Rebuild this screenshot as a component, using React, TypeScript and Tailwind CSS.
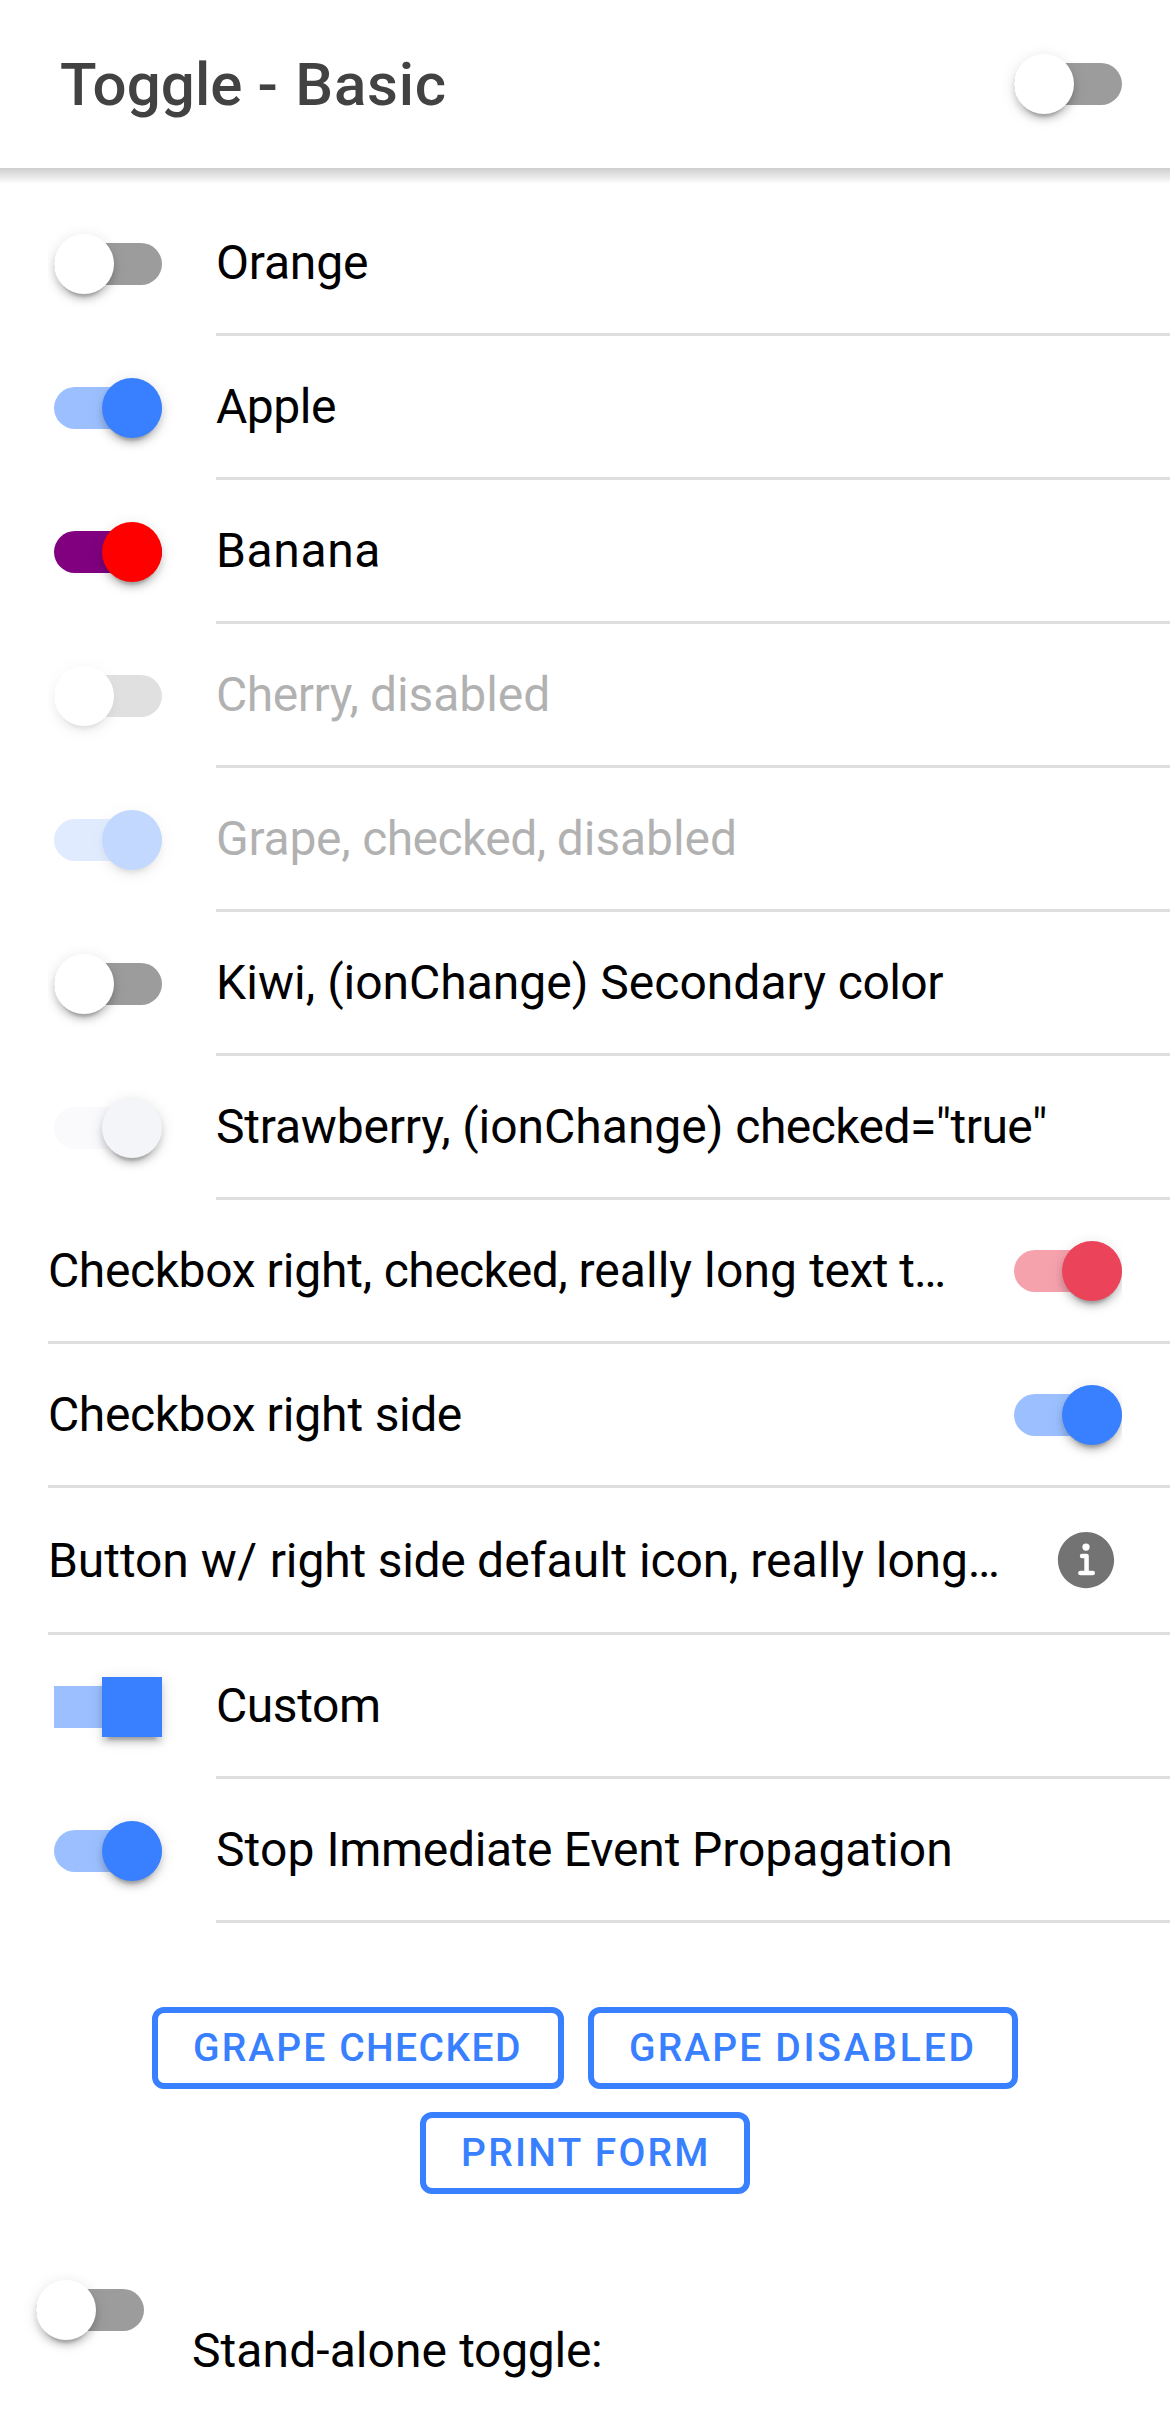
import type { ReactNode } from "react";
import { IoInformationCircle } from "react-icons/io5";

// Roboto advance widths in font units (2048 per em).
const ADVANCE: Record<string, number> = {
  " ": 507, A: 1336, B: 1275, C: 1333, E: 1164, G: 1395, I: 557, K: 1284, O: 1408, P: 1292, S: 1217,
  a: 1114, b: 1149, c: 1072, d: 1155, e: 1085, f: 711, g: 1149, h: 1128, i: 497, k: 1038, l: 497, m: 1795,
  n: 1130, o: 1168, p: 1149, r: 693, s: 1057, t: 669, u: 1129, v: 992, w: 1538, x: 1015, y: 969,
  ",": 402, "(": 700, ")": 712, "=": 1124, '"': 655, "-": 565, "/": 844, "…": 1080,
};

// Letter spacing that brings a word onto the 16-unit text grid, at three pixels per unit.
function gridTracking(word: string) {
  let sum = 0;
  for (const char of word) {
    const advance = (ADVANCE[char] ?? 1024) / 128;
    sum += Math.round(advance) - advance;
  }
  return (sum * 3) / word.length;
}

function Label({ text, className = "" }: { text: string; className?: string }) {
  const words = text.match(/\S+\s?/g) ?? [];
  return (
    <span className={`whitespace-pre ${className}`}>
      {words.map((word, index) => (
        <span key={index} style={{ letterSpacing: `${gridTracking(word).toFixed(3)}px` }}>
          {word}
        </span>
      ))}
    </span>
  );
}

type ToggleProps = {
  checked?: boolean;
  track?: string;
  knob?: string;
  square?: boolean;
};

function Toggle({ checked = false, track, knob, square = false }: ToggleProps) {
  const trackColor = track ?? (checked ? "bg-[#9cc0ff]" : "bg-[#9c9c9c]");
  const knobColor = knob ?? (checked ? "bg-[#3880ff]" : "bg-white");
  return (
    <div
      role="switch"
      aria-checked={checked}
      className={`flex h-[42px] w-[108px] shrink-0 items-center ${checked ? "justify-end" : "justify-start"} ${square ? "" : "rounded-[21px]"} ${trackColor}`}
    >
      <div
        className={`size-[60px] shrink-0 shadow-[0_9px_3px_-6px_rgba(0,0,0,0.2),0_6px_6px_0_rgba(0,0,0,0.14),0_3px_15px_0_rgba(0,0,0,0.12)] ${square ? "" : "rounded-full"} ${knobColor}`}
      />
    </div>
  );
}

function StartItem({ label, disabled = false, children }: { label: string; disabled?: boolean; children: ReactNode }) {
  return (
    <li className="flex h-[144px] items-start pl-[48px]">
      <div className={`w-[168px] shrink-0 overflow-hidden pt-[51px] pb-[36px] pl-[6px] ${disabled ? "opacity-30" : ""}`}>
        {children}
      </div>
      <div className="flex h-full flex-1 items-center border-b-[3px] border-[#dedede]">
        <Label text={label} className={disabled ? "opacity-30" : ""} />
      </div>
    </li>
  );
}

function EndItem({ label, children }: { label: string; children: ReactNode }) {
  return (
    <li className="pl-[48px]">
      <div className="flex h-[144px] items-center justify-between border-b-[3px] border-[#dedede] pr-[48px]">
        <Label text={label} />
        <div className="h-full shrink-0 overflow-hidden pt-[50px] pl-[48px]">{children}</div>
      </div>
    </li>
  );
}

function OutlineButton({ className, children }: { className: string; children: ReactNode }) {
  return (
    <button
      className={`flex h-[82px] items-center rounded-[12px] border-[6px] border-[#3880ff] pl-[35px] text-[39px] leading-none font-medium whitespace-pre text-[#3880ff] uppercase ${className}`}
    >
      {children}
    </button>
  );
}

export default function App() {
  return (
    <div className="h-[2427px] w-[1170px] overflow-hidden bg-white font-['Roboto',sans-serif] text-[48px] leading-[60px] text-black">
      <header className="flex h-[168px] items-center justify-between pr-[48px] pl-[60px]">
        <h1 className="pt-[2px] text-[60px] leading-[72px] font-medium text-[#424242]">
          <span className="tracking-[0.1px]">Toggle </span>
          <span className="tracking-[1.2px]">- </span>
          <span className="tracking-[0.75px]">Basic</span>
        </h1>
        <Toggle />
      </header>
      <div className="h-[15px] bg-linear-to-b from-[#cecece] to-[#fcfcfc]" />

      <ul className="pt-[9px]">
        <StartItem label="Orange">
          <Toggle />
        </StartItem>
        <StartItem label="Apple">
          <Toggle checked />
        </StartItem>
        <StartItem label="Banana">
          <Toggle checked track="bg-[#800080]" knob="bg-[#ff0000]" />
        </StartItem>
        <StartItem label="Cherry, disabled" disabled>
          <Toggle />
        </StartItem>
        <StartItem label="Grape, checked, disabled" disabled>
          <Toggle checked />
        </StartItem>
        <StartItem label="Kiwi, (ionChange) Secondary color">
          <Toggle />
        </StartItem>
        <StartItem label={'Strawberry, (ionChange) checked="true"'}>
          <Toggle checked track="bg-[#fafafc]" knob="bg-[#f4f5f8]" />
        </StartItem>
        <EndItem label="Checkbox right, checked, really long text t…">
          <Toggle checked track="bg-[#f5a2ad]" knob="bg-[#eb445a]" />
        </EndItem>
        <EndItem label="Checkbox right side">
          <Toggle checked />
        </EndItem>
        <li className="pl-[48px]">
          <div className="flex h-[147px] items-center justify-between border-b-[3px] border-[#dedede] pr-[48px]">
            <Label text="Button w/ right side default icon, really long…" className="pt-[2px]" />
            <IoInformationCircle className="size-[72px] shrink-0 text-[#737373]" />
          </div>
        </li>
        <StartItem label="Custom">
          <Toggle checked square />
        </StartItem>
        <StartItem label="Stop Immediate Event Propagation">
          <Toggle checked />
        </StartItem>
      </ul>

      <div className="flex flex-wrap justify-center gap-x-[24px] gap-y-[23px] px-[48px] pt-[84px]">
        <OutlineButton className="w-[412px]">
          <span className="tracking-[2.1px]">Grape </span>
          <span className="tracking-[1.4px]">Checked</span>
        </OutlineButton>
        <OutlineButton className="w-[430px]">
          <span className="tracking-[2.1px]">Grape </span>
          <span className="tracking-[2.8px]">Disabled</span>
        </OutlineButton>
        <OutlineButton className="w-[330px]">
          <span className="tracking-[2.25px]">Print Form</span>
        </OutlineButton>
      </div>

      <div className="flex items-start gap-[48px] pt-[95px] pl-[36px]">
        <Toggle />
        <Label text="Stand-alone toggle:" className="pt-[32px]" />
      </div>
    </div>
  );
}
